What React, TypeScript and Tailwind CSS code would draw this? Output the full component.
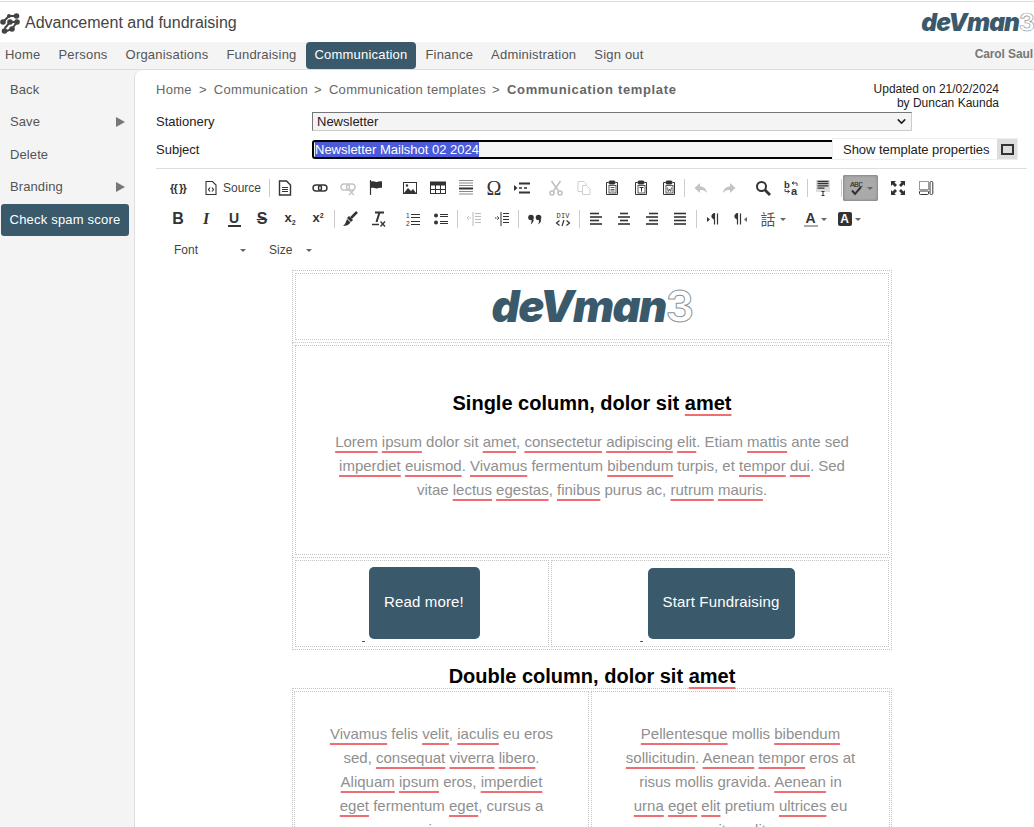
import type { ReactNode } from "react";
import { ChevronDown } from "lucide-react";

const navItems = ["Home", "Persons", "Organisations", "Fundraising", "Communication", "Finance", "Administration", "Sign out"];

// spellcheck underline
function Sp({ children }: { children: ReactNode }) {
  return <span className="underline decoration-[#ee6e73] decoration-2 underline-offset-[4px] [text-decoration-skip-ink:none]">{children}</span>;
}

function Logo({ big }: { big?: boolean }) {
  return (
    <span className={`font-['Inter',sans-serif] font-black italic text-[#3a5a6b] leading-none ${big ? "text-[43.5px] tracking-[-1.5px]" : "text-[24.5px] tracking-[-0.9px]"}`}>
      de<span className="uppercase">v</span>man
      <span className={`font-bold not-italic text-white ${big ? "[-webkit-text-stroke:1px_#8b979e]" : "[-webkit-text-stroke:0.7px_#8b979e]"}`}>3</span>
    </span>
  );
}

function Ic({ children, w = 16 }: { children: ReactNode; w?: number }) {
  return (
    <svg width={w} height="16" viewBox={`0 0 ${w} 16`} fill="none" stroke="#333" strokeWidth="1" className="block shrink-0">
      {children}
    </svg>
  );
}

const Lines = ({ rows }: { rows: number[][] }) => (
  <>
    {rows.map((r, i) => (
      <path key={i} d={`M${r[0]} ${2.5 + i * 3.5}H${r[1]}`} strokeWidth="1.6" />
    ))}
  </>
);

const pasteBase = (
  <>
    <path d="M4.5 2.5H2.5v12h11v-12h-2" />
    <rect x="5" y="1" width="6" height="3" rx="1" fill="#333" />
    <rect x="5" y="5.5" width="7" height="7.5" strokeWidth=".8" />
  </>
);

const icons: Record<string, ReactNode> = {
  placeholder: <span className="flex w-4 justify-center whitespace-nowrap font-['Liberation_Sans',sans-serif] text-[11px] font-bold leading-4 tracking-[-0.8px] text-[#333]">{"{{ }}"}</span>,
  source: <Ic><path d="M3 1.5h6.5L13 5v9.5H3z" strokeWidth="1.1" /><path d="M7 7.5L5.5 9.5 7 11.5M9 7.5l1.5 2L9 11.5" strokeWidth="1.2" /></Ic>,
  doc: <Ic><path d="M2.5 1h7L13.5 5v10h-11z" strokeWidth="1.4" /><path d="M5 7.5h6M5 9.5h6M5 11.5h6" /></Ic>,
  link: <Ic><rect x="1" y="5" width="8.5" height="6" rx="3" strokeWidth="1.4" /><rect x="6.5" y="5" width="8.5" height="6" rx="3" strokeWidth="1.4" /></Ic>,
  unlink: <Ic><g stroke="#c4c4c4"><rect x="1" y="4" width="8.5" height="6" rx="3" strokeWidth="1.4" /><rect x="6.5" y="4" width="8.5" height="6" rx="3" strokeWidth="1.4" /><path d="M9 10l5 5M14 10l-5 5" strokeWidth="1.4" /></g></Ic>,
  flag: <Ic><path d="M1.5 0v15" strokeWidth="1.2" /><path d="M2 1.5c3-1 5 .5 6 .5s3-1 5-.5V8c-2-.5-4 .5-5 .5S5 7 2 8z" fill="#333" stroke="none" /></Ic>,
  image: <Ic><rect x="1" y="2" width="14" height="12" fill="#333" stroke="none" /><rect x="2" y="3" width="12" height="10" fill="#fff" stroke="none" /><path d="M2 13l4-5 3 3 2-2 3 4z" fill="#333" stroke="none" /><circle cx="5" cy="5.5" r="1.2" fill="#333" stroke="none" /></Ic>,
  table: <Ic><rect x=".5" y="2.5" width="15" height="11" /><rect x=".5" y="2" width="15" height="3" fill="#333" /><path d="M.5 9.5h15M5.5 5v9M10.5 5v9" /></Ic>,
  hr: <Ic><path d="M1 .5h14M1 3h14M1 5.5h14M1 11.5h14M1 14h14" stroke="#888" /><path d="M1 8.5h14" strokeWidth="2" /></Ic>,
  omega: <span className="block w-4 text-center font-['Liberation_Serif',serif] text-[20px] leading-4 text-[#333]">Ω</span>,
  pagebreak: <Ic><path d="M0 5l3.5 3L0 11z" fill="#333" stroke="none" /><path d="M5 3.5h11M5 12.5h11" strokeWidth="2" /><path d="M5 8h3M10 8h3" strokeWidth="1.5" /></Ic>,
  cut: <Ic><g stroke="#c0c0c0" strokeWidth="1.6"><path d="M3.5 1l7 10M12.5 1l-7 10" /><circle cx="4" cy="13" r="2" /><circle cx="12" cy="13" r="2" /></g></Ic>,
  copy: <Ic><g stroke="#d0d0d0"><path d="M2 1.5h6l2 2v8H2z" /><path d="M6.5 5.5h4l3.5 3.5v5.5H6.5z" fill="#fff" /></g></Ic>,
  paste: <Ic>{pasteBase}<path d="M6.5 7.5h4M6.5 9.5h4M6.5 11h4" strokeWidth=".8" /></Ic>,
  pasteT: <Ic>{pasteBase}<path d="M6.5 7.5h4M8.5 7.5v4" /></Ic>,
  pasteW: <Ic>{pasteBase}<path d="M6.5 7.5l.8 4 1.2-2.5 1.2 2.5.8-4" strokeWidth=".8" /></Ic>,
  undo: <Ic><path d="M7 3L1.5 8 7 13V10c3 0 5 .5 7 3-.5-4-3-6.5-7-6.5z" fill="#c4c4c4" stroke="none" /></Ic>,
  redo: <Ic><path d="M9 3l5.5 5L9 13V10c-3 0-5 .5-7 3 .5-4 3-6.5 7-6.5z" fill="#c4c4c4" stroke="none" /></Ic>,
  find: <Ic><circle cx="6.5" cy="6.5" r="4.5" strokeWidth="2" /><path d="M10 10l5 5" strokeWidth="2.8" /></Ic>,
  replace: <Ic><text x="1" y="7.5" fontSize="9.5" fontWeight="700" fill="#333" stroke="none" fontFamily="Liberation Sans">b</text><text x="8" y="15" fontSize="11" fontWeight="700" fill="#333" stroke="none" fontFamily="Liberation Sans">a</text><path d="M9 3h5v3M9 3l2-1.5M9 3l2 1.5M6.5 11.5H2V9M6.5 11.5l-2-1.5M6.5 11.5l-2 1.5" strokeWidth=".9" /></Ic>,
  select: <Ic><rect x="1" y="0" width="14" height="12" fill="#ddd" stroke="none" /><path d="M2.5 1.5h11M2.5 3.7h11M2.5 5.9h11M2.5 8.1h7" strokeWidth="1.3" /><path d="M6.5 11.5h3M8 11.5v4M6.5 15.5h3" /></Ic>,
  maximize: <Ic><path d="M1 1h5L4.5 2.5 7 5 5 7 2.5 4.5 1 6zM15 1v5l-1.5-1.5L11 7 9 5l2.5-2.5L10 1zM1 15v-5l1.5 1.5L5 9l2 2-2.5 2.5L6 15zM15 15h-5l1.5-1.5L9 11l2-2 2.5 2.5L15 10z" fill="#333" stroke="none" /></Ic>,
  blocks: <Ic><path d="M1.5 1.5h9v8h-9z" strokeDasharray="1 1" /><rect x="1.5" y="11" width="9" height="3.5" rx="1" /><rect x="12" y="1.5" width="2.8" height="13" rx="1.2" /></Ic>,
  bold: <span className="block w-4 text-center font-['Liberation_Sans',sans-serif] text-[16px] font-bold leading-4 text-[#333]">B</span>,
  italic: <span className="block w-4 text-center font-['Liberation_Serif',serif] text-[16px] font-bold italic leading-4 text-[#333]">I</span>,
  underline: <span className="block w-[13px] border-b-2 border-[#333] text-center font-['Liberation_Sans',sans-serif] text-[14px] font-bold leading-[13px] text-[#333]">U</span>,
  strike: <span className="block w-4 text-center font-['Liberation_Sans',sans-serif] text-[16px] font-bold leading-4 text-[#333] line-through">S</span>,
  sub: <span className="block w-4 text-center font-['Liberation_Sans',sans-serif] text-[13px] font-bold leading-4 text-[#333]">x<span className="relative top-[3px] text-[7px]">2</span></span>,
  sup: <span className="block w-4 text-center font-['Liberation_Sans',sans-serif] text-[13px] font-bold leading-4 text-[#333]">x<span className="relative top-[-4px] text-[7px]">2</span></span>,
  brush: <Ic><path d="M9 7L15 1" strokeWidth="2.5" /><path d="M7 5l4 4-2 2-4-4zM5 8l3.5 3.5C7 14 4 15 1 15c1.5-1 2.5-2.5 4-7z" fill="#333" stroke="none" /></Ic>,
  clear: <Ic><path d="M5 1.5h9M9.5 1.5L6.5 11" strokeWidth="2" /><path d="M2 13.5h7" strokeWidth="1.5" /><path d="M10.5 10.5l4.5 5M15 10.5l-4.5 5" strokeWidth="1.3" /></Ic>,
  ol: <Ic><text x="1" y="7" fontSize="6.5" fill="#333" stroke="none" fontFamily="Liberation Sans">1</text><text x="1" y="14.5" fontSize="6.5" fill="#333" stroke="none" fontFamily="Liberation Sans">2</text><path d="M6 3.5h9M6 6.5h9M6 10.5h9M6 13.5h9" strokeWidth="1.2" /></Ic>,
  ul: <Ic><circle cx="3" cy="4.5" r="2" fill="#333" stroke="none" /><circle cx="3" cy="11.5" r="2" fill="#333" stroke="none" /><path d="M7 3.5h8M7 5.5h8M7 10.5h8M7 12.5h8" strokeWidth="1.2" /></Ic>,
  outdent: <Ic><g stroke="#bbb"><path d="M9 2.5h6M9 5.5h6M9 8.5h6M9 11.5h6M7 1v14" /><path d="M5 7H1M3 5L1 7l2 2" strokeDasharray="1 .5" /></g></Ic>,
  indent: <Ic><path d="M9 2.5h6M9 5.5h6M9 8.5h6M9 11.5h6M7 1v14" /><path d="M1 7h4M3 5l2 2-2 2" strokeDasharray="1 .5" /></Ic>,
  quote: <Ic><g fill="#333" stroke="none"><circle cx="4" cy="6.5" r="2.8" /><circle cx="11.5" cy="6.5" r="2.8" /><path d="M4.5 8.5h2.3C6.5 10.5 5.5 12.5 3.5 13.5 4.3 12 4.8 10.5 4.5 8.5zM12 8.5h2.3C14 10.5 13 12.5 11 13.5 11.8 12 12.3 10.5 12 8.5z" /></g></Ic>,
  div: <Ic><text x="1.5" y="7" fontSize="7" fill="#333" stroke="none" fontFamily="Liberation Mono" textLength="13">DIV</text><path d="M4.5 9.5L1.5 12l3 2.5M11.5 9.5l3 2.5-3 2.5M9 9l-2 6" strokeWidth="1.2" /></Ic>,
  left: <Ic><Lines rows={[[2, 11], [2, 14], [2, 11], [2, 14]]} /></Ic>,
  center: <Ic><Lines rows={[[4, 12], [2, 14], [4, 12], [2, 14]]} /></Ic>,
  right: <Ic><Lines rows={[[5, 14], [2, 14], [5, 14], [2, 14]]} /></Ic>,
  justify: <Ic><Lines rows={[[2, 14], [2, 14], [2, 14], [2, 14]]} /></Ic>,
  ltr: <Ic><path d="M2 6l3 2.5L2 11z" fill="#333" stroke="none" /><path d="M9.5 2.5v11M12.5 2.5v11" strokeWidth="1.2" /><path d="M9.5 2.5C6 2.5 6 8 9.5 8z" fill="#333" /></Ic>,
  rtl: <Ic><path d="M14 6l-3 2.5 3 2.5z" fill="#666" stroke="none" /><path d="M4.5 2.5v11M7.5 2.5v11" strokeWidth="1.2" /><path d="M4.5 2.5C1 2.5 1 8 4.5 8z" fill="#333" /></Ic>,
  lang: <span className="block w-4 font-['Noto_Sans_CJK_TC',sans-serif] text-[15px] leading-4 text-[#555]">話</span>,
  color: <span className="block w-[14px] border-b-2 border-[#aaa] text-center font-['Liberation_Sans',sans-serif] text-[14px] font-bold leading-[14px] text-[#333]">A</span>,
  bg: <span className="block h-[14px] w-[14px] rounded-[2px] bg-[#333] text-center font-['Liberation_Sans',sans-serif] text-[12px] font-bold leading-[14px] text-white">A</span>,
  spell: <Ic w={15}><text x="1" y="7" fontSize="8" fill="#222" stroke="none" fontFamily="Liberation Mono" textLength="13">ABC</text><path d="M3 10.5l3 3.5 6-7" strokeWidth="2" /></Ic>,
};

const Caret = () => <span className="ml-[3px] h-0 w-0 border-x-[3px] border-t-[3px] border-x-transparent border-t-[#666]" />;
const Sep = ({ className = "ml-[2px]" }: { className?: string }) => <span className={`h-[18px] w-px bg-[#ccc] ${className}`} />;

function Tool({ name, caret, className = "" }: { name: string; caret?: boolean; className?: string }) {
  return (
    <span className={`flex h-[24px] w-[28px] shrink-0 items-center justify-center ${className}`}>
      {icons[name]}
      {caret && <Caret />}
    </span>
  );
}

function EditorToolbar() {
  return (
    <div className="flex flex-col pl-[8px] font-['Liberation_Sans',sans-serif] text-[#444]">
      <div className="flex h-[24px] items-center">
        <Tool name="placeholder" />
        <span className="ml-[11px] flex items-center gap-[4px] text-[12px]">{icons.source}Source</span>
        <Sep className="ml-[8px]" />
        <Tool name="doc" className="ml-[1px]" />
        <Tool name="link" className="ml-[7px]" />
        <Tool name="unlink" />
        <Tool name="flag" className="ml-[1px]" />
        <Tool name="image" className="ml-[5px]" />
        <Tool name="table" />
        <Tool name="hr" />
        <Tool name="omega" />
        <Tool name="pagebreak" />
        <Tool name="cut" className="ml-[6px]" />
        <Tool name="copy" />
        <Tool name="paste" />
        <Tool name="pasteT" className="ml-[1px]" />
        <Tool name="pasteW" />
        <Sep className="ml-[1px]" />
        <Tool name="undo" className="ml-[2px]" />
        <Tool name="redo" />
        <Tool name="find" className="ml-[6px]" />
        <Tool name="replace" />
        <Sep />
        <Tool name="select" className="ml-[1px]" />
        <Sep className="ml-[4px]" />
        <span className="ml-[1px] flex h-[26px] w-[35px] items-center justify-center rounded-[2px] bg-[#aaa] shadow-[inset_0_0_3px_#666]">
          {icons.spell}
          <Caret />
        </span>
        <Tool name="maximize" className="ml-[6px]" />
        <Tool name="blocks" />
      </div>
      <div className="mt-[7px] flex h-[24px] items-center">
        {["bold", "italic", "underline", "strike", "sub", "sup"].map((n) => <Tool key={n} name={n} />)}
        <Sep />
        <Tool name="brush" className="ml-[1px]" />
        <Tool name="clear" />
        <Tool name="ol" className="ml-[7px]" />
        <Tool name="ul" />
        <Sep />
        <Tool name="outdent" className="ml-[2px]" />
        <Tool name="indent" />
        <Sep />
        <Tool name="quote" className="ml-[2px]" />
        <Tool name="div" />
        <Sep />
        <Tool name="left" className="ml-[2px]" />
        <Tool name="center" />
        <Tool name="right" />
        <Tool name="justify" />
        <Sep />
        <Tool name="ltr" className="ml-[2px]" />
        <Tool name="rtl" />
        <Tool name="lang" caret className="ml-[4px]" />
        <Tool name="color" caret className="ml-[14px]" />
        <Tool name="bg" caret className="ml-[6px]" />
      </div>
      <div className="mt-[7px] flex h-[24px] items-center text-[12px]">
        <span className="flex w-[95px] items-center justify-between pl-[10px] pr-[13px]">Font<Caret /></span>
        <span className="flex w-[53px] items-center justify-between pl-[10px]">Size<Caret /></span>
      </div>
    </div>
  );
}

function Cell({ className = "", children }: { className?: string; children?: ReactNode }) {
  return <div className={`border border-dotted border-[#c4c4c4] ${className}`}>{children}</div>;
}

const Box = ({ className = "", children }: { className?: string; children: ReactNode }) => (
  <div className={`border border-dotted border-[#c4c4c4] p-[2px] ${className}`}>{children}</div>
);

const CtaButton = ({ label, className }: { label: string; className: string }) => (
  <span className={`flex items-center justify-center rounded-[5px] bg-[#3a5a6b] pb-[2px] font-['Liberation_Sans',sans-serif] text-[15px] tracking-[0.15px] text-white ${className}`}>{label}</span>
);

const Tick = ({ className }: { className: string }) => <span className={`absolute h-px w-[3px] bg-[#555] ${className}`} />;

function EmailBody() {
  const para = "text-[15px] leading-[24px] text-[#8f8f8f] text-center";
  return (
    <div className="ml-[157px] w-[600px] font-['Liberation_Sans',sans-serif]">
      <Box>
        <Cell className="flex h-[67px] items-center justify-center">
          <Logo big />
        </Cell>
      </Box>
      <Box className="mt-[-1px]">
        <Cell className="h-[210px] pt-[45px]">
          <h2 className="text-center text-[20px] font-bold leading-[24px] text-black">
            Single column, dolor sit <Sp>amet</Sp>
          </h2>
          <p className={`mx-auto mt-[15px] w-[530px] ${para}`}>
            <Sp>Lorem</Sp> <Sp>ipsum</Sp> dolor sit <Sp>amet</Sp>, <Sp>consectetur</Sp> <Sp>adipiscing</Sp> <Sp>elit</Sp>. Etiam <Sp>mattis</Sp> ante sed <Sp>imperdiet</Sp> <Sp>euismod</Sp>. <Sp>Vivamus</Sp> fermentum <Sp>bibendum</Sp> turpis, et <Sp>tempor</Sp> <Sp>dui</Sp>. Sed vitae <Sp>lectus</Sp> <Sp>egestas</Sp>, <Sp>finibus</Sp> purus ac, <Sp>rutrum</Sp> <Sp>mauris</Sp>.
          </p>
        </Cell>
      </Box>
      <Box className="mt-[-1px]">
        <div className="flex gap-[2px]">
          <Cell className="relative flex h-[87px] w-[254px] justify-center pl-[4px] pt-[6px]">
            <CtaButton label="Read more!" className="h-[72px] w-[111px]" />
            <Tick className="left-[66px] top-[80px]" />
          </Cell>
          <Cell className="relative flex h-[87px] flex-1 justify-center pl-[2px] pt-[7px]">
            <CtaButton label="Start Fundraising" className="h-[71px] w-[147px]" />
            <Tick className="left-[88px] top-[80px]" />
          </Cell>
        </div>
      </Box>
      <h2 className="mt-[14px] text-center text-[20px] font-bold leading-[24px] text-black">
        Double column, dolor sit <Sp>amet</Sp>
      </h2>
      <div className="flex gap-[2px] border border-dotted border-[#c4c4c4] p-[1px] pt-[2px]">
        <Cell className="w-[295px] px-[30px] pt-[30px]">
          <p className={para}>
            <Sp>Vivamus</Sp> felis <Sp>velit</Sp>, <Sp>iaculis</Sp> eu eros sed, <Sp>consequat</Sp> <Sp>viverra</Sp> <Sp>libero</Sp>. <Sp>Aliquam</Sp> <Sp>ipsum</Sp> eros, <Sp>imperdiet</Sp> <Sp>eget</Sp> fermentum <Sp>eget</Sp>, cursus a risus.
          </p>
        </Cell>
        <Cell className="flex-1 px-[32px] pt-[30px]">
          <p className={para}>
            <Sp>Pellentesque</Sp> mollis <Sp>bibendum</Sp> <Sp>sollicitudin</Sp>. <Sp>Aenean</Sp> <Sp>tempor</Sp> eros at risus mollis gravida. <Sp>Aenean</Sp> in <Sp>urna</Sp> <Sp>eget</Sp> <Sp>elit</Sp> pretium <Sp>ultrices</Sp> eu vitae elit.
          </p>
        </Cell>
      </div>
    </div>
  );
}

export default function App() {
  return (
    <div className="flex h-[827px] w-[1034px] flex-col overflow-hidden bg-white font-['Liberation_Sans',sans-serif]">
      <header className="mt-px flex h-[41px] items-start justify-between overflow-hidden border-t border-[#ddd] pt-[10px]">
        <div className="flex items-center gap-[4px]">
          <svg width="21" height="21" viewBox="0 0 21 21" fill="#444" stroke="#444" strokeWidth="2" strokeLinecap="round" className="shrink-0">
            <path d="M3 9l6-6h8M5 15l5-6h7M4 19l8-3 5-7" fill="none" />
            <circle cx="9" cy="3" r="2" stroke="none" />
            <circle cx="16.5" cy="3" r="2.8" stroke="none" />
            <circle cx="3" cy="9" r="2.8" stroke="none" />
            <circle cx="10" cy="9" r="2.8" stroke="none" />
            <circle cx="17" cy="9" r="2.8" stroke="none" />
            <circle cx="4.5" cy="18" r="2.8" stroke="none" />
            <circle cx="12" cy="16" r="2.8" stroke="none" />
          </svg>
          <span className="text-[16px] leading-[22px] text-[#444]">Advancement and fundraising</span>
        </div>
        <span className="mt-[-2px] block leading-none"><Logo /></span>
      </header>

      <nav className="flex h-[28px] items-stretch border-b border-[#ddd] bg-[#f4f4f4] pr-px text-[13px] tracking-[0.2px] text-[#555]">
        {navItems.map((item) => (
          <span
            key={item}
            className={item === "Communication" ? "flex items-center rounded-[4px] bg-[#3a5a6b] px-[9px] pb-px text-white" : "flex items-center px-[9px] pb-px first:pl-[5px]"}
          >
            {item}
          </span>
        ))}
        <span className="ml-auto flex items-center pb-[4px] text-[12px] font-bold tracking-[-0.1px] text-[#777]">Carol Saul</span>
      </nav>

      <div className="flex min-h-0 flex-1 bg-[#f4f4f4]">
        <aside className="flex w-[134px] shrink-0 flex-col pt-[3px] text-[13px] tracking-[0.1px] text-[#555]">
          {["Back", "Save", "Delete", "Branding"].map((item) => (
            <div key={item} className="flex h-[32.5px] items-center justify-between pl-[10px] pr-[9px]">
              {item}
              {(item === "Save" || item === "Branding") && (
                <span className="h-0 w-0 border-y-[5px] border-l-[9px] border-y-transparent border-l-[#777]" />
              )}
            </div>
          ))}
          <div className="ml-[1px] mt-px flex h-[32px] w-[128px] items-center justify-center rounded-[3px] bg-[#3a5a6b] tracking-[0.2px] text-white">Check spam score</div>
        </aside>

        <main className="min-w-0 flex-1 rounded-tl-[8px] border-l border-[#ddd] bg-white pt-[10px]">
          <div className="flex justify-between pl-[21px] pr-[35px]">
            <div className="flex gap-[6px] text-[13px] tracking-[0.3px] text-[#666]">
              <span>Home</span><span className="mx-[1px]">&gt;</span><span>Communication</span><span>&gt;</span><span className="ml-[1px]">Communication templates</span><span>&gt;</span><b className="ml-[1px] tracking-[0.65px]">Communication template</b>
            </div>
            <div className="mt-[2px] text-right text-[12px] leading-[14px] text-[#222]">
              Updated on 21/02/2024
              <br />
              by Duncan Kaunda
            </div>
          </div>

          <div className="mt-[2px] flex items-center pl-[21px] text-[13px] leading-[19px] text-[#222]">
            <label className="w-[156px]">Stationery</label>
            <div className="flex h-[19px] w-[600px] items-center justify-between border border-[#ccc] border-l-[#767676] border-t-[#767676] bg-[#f4f4f4] pl-[4px] pr-[3px]">
              Newsletter
              <ChevronDown size={13} strokeWidth={3} color="#222" />
            </div>
          </div>

          <div className="relative mt-[9px] flex items-center pl-[21px] text-[13px] leading-[19px] text-[#222]">
            <label className="w-[156px]">Subject</label>
            <div className="flex h-[19px] w-[525px] items-center rounded-l-[3px] border-y-2 border-l-2 border-black bg-[#f4f4f4] pl-[1px]">
              <span className="bg-[#4a5ad8] leading-[15px] text-white">Newsletter Mailshot 02 2024</span>
            </div>
            <div className="absolute left-[697px] top-[-2px] flex h-[22px] w-[186px] items-center justify-between whitespace-nowrap border border-[#eee] bg-white pl-[10px] tracking-[-0.04px]">
              Show template properties
              <span className="flex h-[20px] w-[20px] items-center justify-center bg-[#ddd]">
                <span className="h-[11px] w-[13px] border-2 border-[#333]" />
              </span>
            </div>
          </div>

          <div className="ml-[21px] mr-[7px] mt-[9px] border-t border-[#ddd] pt-[7px]">
            <EditorToolbar />
          </div>

          <div className="mt-[8px]">
            <EmailBody />
          </div>
        </main>
      </div>
    </div>
  );
}
